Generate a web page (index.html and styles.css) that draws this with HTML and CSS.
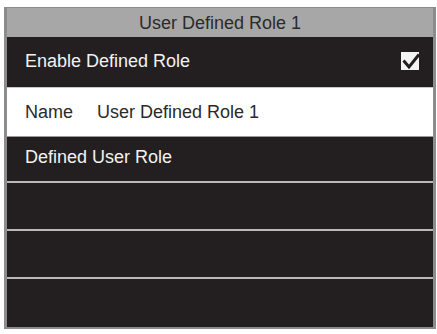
FILE: index.html
```html
<!DOCTYPE html>
<html>
<head>
<meta charset="utf-8">
<link rel="stylesheet" href="styles.css">
</head>
<body>
<div class="frame">
  <div class="header">User Defined Role 1</div>
  <div class="row dark enable">
    <span class="label">Enable Defined Role</span>
    <svg class="check" width="18" height="18" viewBox="0 0 18 18">
      <rect x="0" y="0" width="18" height="18" fill="#f4f4f4"/>
      <path d="M2.5 8.5 L8 15 L18 2.5" fill="none" stroke="#231f20" stroke-width="3"/>
    </svg>
  </div>
  <div class="row light">
    <span class="label name">Name</span>
    <span class="label">User Defined Role 1</span>
  </div>
  <div class="row dark short">
    <span class="label">Defined User Role</span>
  </div>
  <div class="row dark"></div>
  <div class="row dark"></div>
  <div class="row dark last"></div>
</div>
</body>
</html>
```

FILE: styles.css
```css
html, body {
  margin: 0;
  padding: 0;
  background: #ffffff;
}
body {
  width: 437px;
  height: 334px;
  font-family: "Liberation Sans", Arial, sans-serif;
}
.frame {
  position: relative;
  margin: 7px 1px 0 4px;
  width: 426px;
  border: 3px solid #8c8c8c;
  border-bottom-width: 2px;
  border-top-width: 1px;
  background: #231f20;
  display: flex;
  flex-direction: column;
}
.header {
  height: 29px;
  background: #a7a7a7;
  color: #2b2b2b;
  font-size: 18px;
  line-height: 30px;
  text-align: center;
}
.row {
  display: flex;
  align-items: center;
  height: 48px;
  box-sizing: border-box;
  padding-left: 18px;
  border-bottom: 2px solid #b9b9b9;
}
.row.enable {
  height: 51px;
  padding-bottom: 2px;
  border-bottom: 1px solid #c8c8c8;
  justify-content: space-between;
  padding-right: 14px;
}
.row.light {
  height: 49px;
  background: #ffffff;
  border-bottom: 1px solid #9a9a9a;
}
.row.short {
  height: 46px;
  padding-bottom: 3px;
}
.row.last {
  border-bottom: none;
}
.dark .label {
  color: #f2f2f2;
}
.light .label {
  color: #2a2a2a;
}
.label {
  font-size: 18px;
}
.name {
  width: 72px;
}
.check {
  display: block;
}
```
